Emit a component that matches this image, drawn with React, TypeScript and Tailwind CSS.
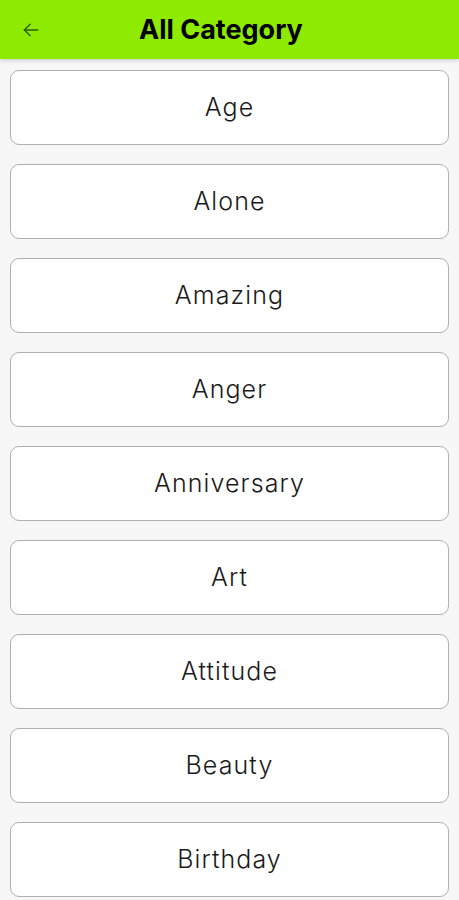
import React from 'react';

const categories = ['Age', 'Alone', 'Amazing', 'Anger', 'Anniversary', 'Art', 'Attitude', 'Beauty', 'Birthday'];

const App = () => {
    return (
        <div className="w-[459px] h-[900px] overflow-hidden bg-[#f7f7f7] font-['Inter',sans-serif]">
            <div className="h-[59px] bg-[#8eeb00] flex items-center shadow-[0_2px_4px_rgba(0,0,0,0.15)] relative z-10">
                <button className="w-[62px] h-full flex items-center justify-center text-[#2f5b00]">
                    <svg width="20" height="20" viewBox="0 0 24 24" fill="none" stroke="currentColor" strokeWidth="1.6" strokeLinecap="round" strokeLinejoin="round">
                        <path d="M20 12H4" />
                        <path d="M11 5l-7 7 7 7" />
                    </svg>
                </button>
                <h1 className="ml-[77px] text-[27px] font-bold text-black leading-none">All Category</h1>
            </div>
            <div className="flex flex-col gap-[19px] px-[10px] pt-[11px]">
                {categories.map((cat) => (
                    <div
                        key={cat}
                        className="h-[75px] shrink-0 bg-white border border-[#b0b0b0] rounded-[9px] flex items-center justify-center text-[25px] font-light tracking-[1.1px] text-[#1a1a1a]"
                    >
                        {cat}
                    </div>
                ))}
            </div>
        </div>
    );
};

export default App;
